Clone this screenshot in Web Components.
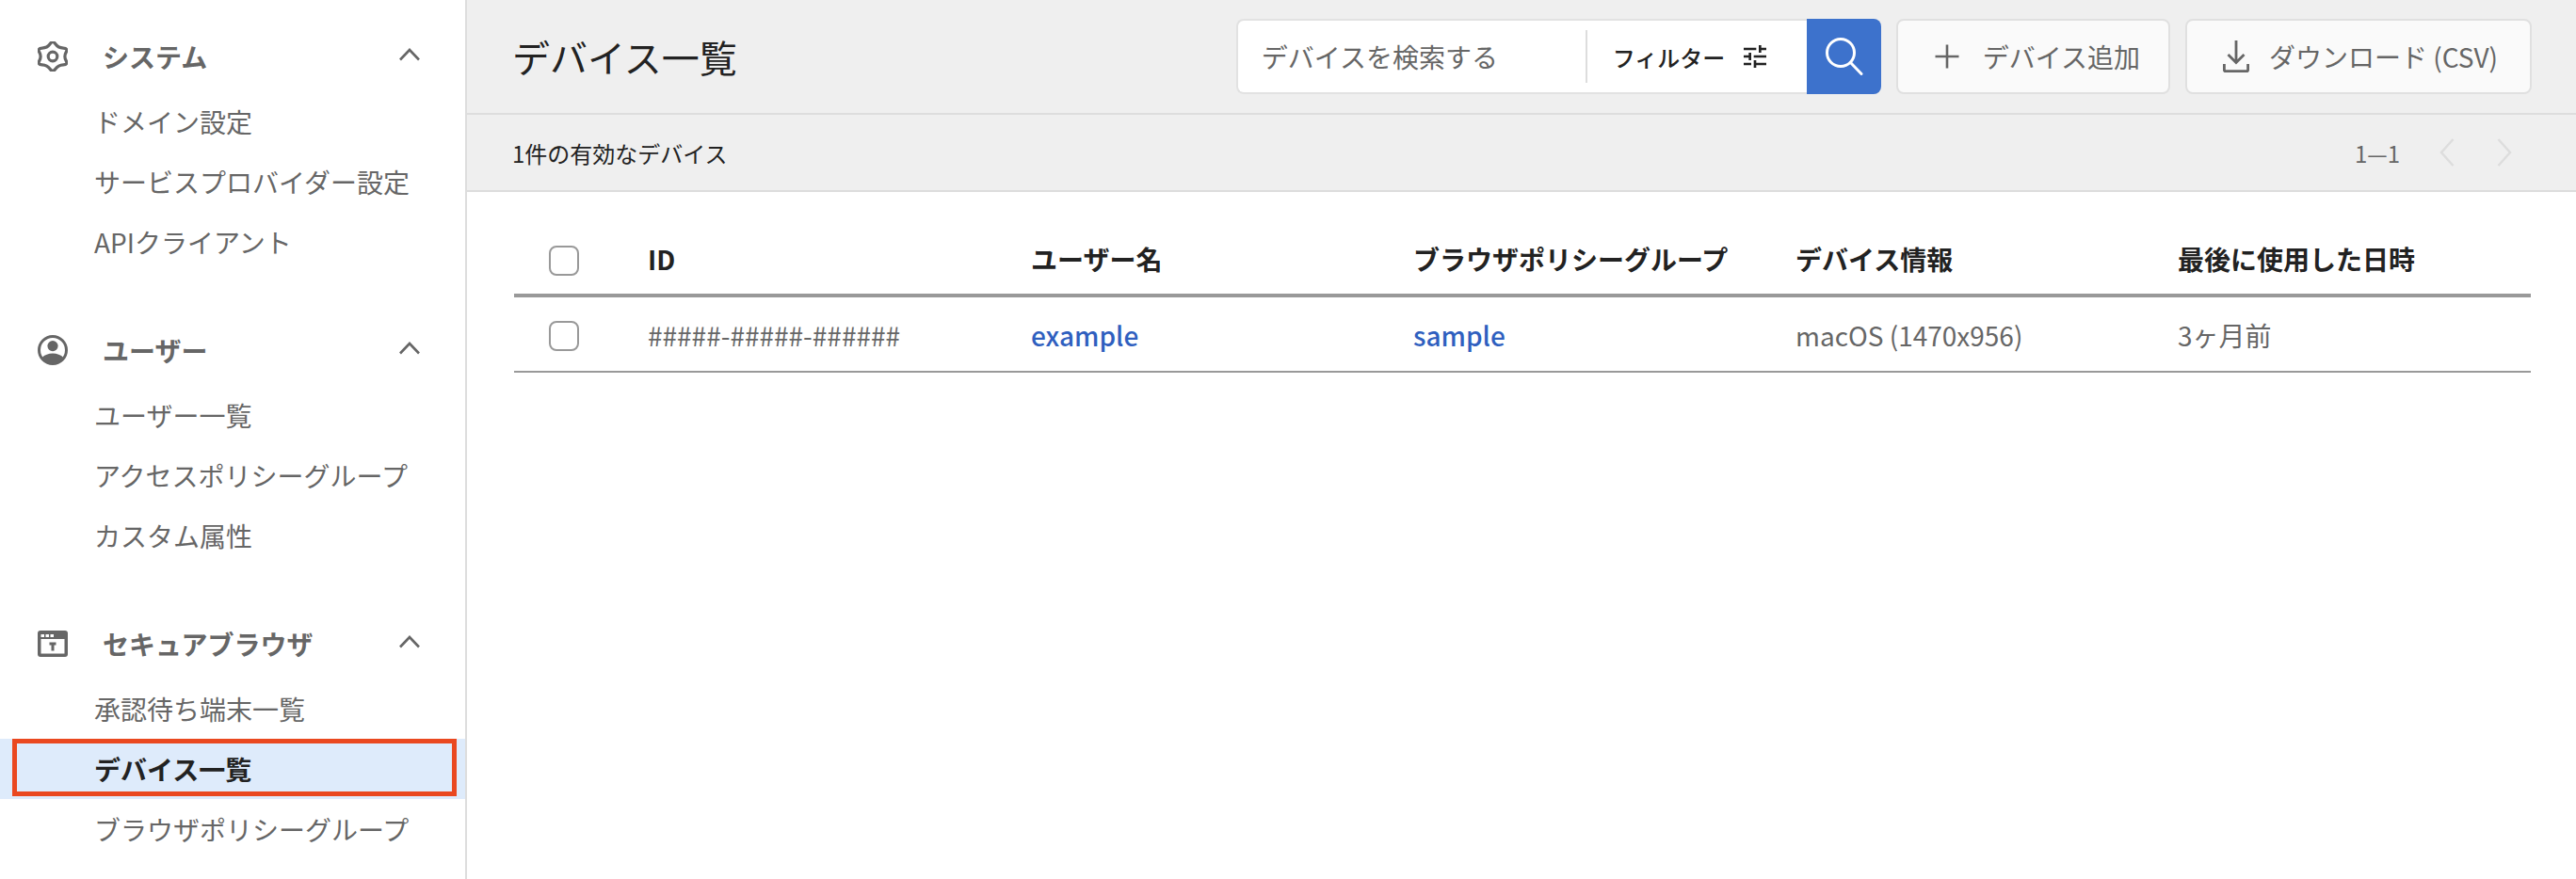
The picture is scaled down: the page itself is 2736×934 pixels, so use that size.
<!DOCTYPE html>
<html lang="ja">
<head>
<meta charset="utf-8">
<title>デバイス一覧</title>
<style>
  html, body { margin: 0; height: 100%; overflow: hidden; }
  body { font-family: "Noto Sans CJK JP", "Noto Sans", sans-serif; color: #666; background: #fff; }
</style>
</head>
<body>
<app-shell>
  <side-nav slot="nav">
    <nav-section label="システム" icon="gear">
      <nav-item>ドメイン設定</nav-item>
      <nav-item>サービスプロバイダー設定</nav-item>
      <nav-item>APIクライアント</nav-item>
    </nav-section>
    <nav-section label="ユーザー" icon="user">
      <nav-item>ユーザー一覧</nav-item>
      <nav-item>アクセスポリシーグループ</nav-item>
      <nav-item>カスタム属性</nav-item>
    </nav-section>
    <nav-section label="セキュアブラウザ" icon="browser">
      <nav-item>承認待ち端末一覧</nav-item>
      <nav-item active>デバイス一覧</nav-item>
      <nav-item>ブラウザポリシーグループ</nav-item>
    </nav-section>
  </side-nav>

  <page-toolbar heading="デバイス一覧">
    <search-box placeholder="デバイスを検索する" filter="フィルター"></search-box>
    <tool-button icon="plus">デバイス追加</tool-button>
    <tool-button icon="download">ダウンロード (CSV)</tool-button>
  </page-toolbar>
  <result-bar summary="1件の有効なデバイス" range="1—1"></result-bar>

  <device-table>
    <table-row head>
      <check-box></check-box>
      <span>ID</span>
      <span>ユーザー名</span>
      <span>ブラウザポリシーグループ</span>
      <span>デバイス情報</span>
      <span>最後に使用した日時</span>
    </table-row>
    <table-row>
      <check-box></check-box>
      <span>#####-#####-######</span>
      <a href="#">example</a>
      <a href="#">sample</a>
      <span>macOS (1470x956)</span>
      <span>3ヶ月前</span>
    </table-row>
  </device-table>
</app-shell>

<script>
// gear outline is a smooth spline through alternating lobe / valley points
const gearPath = (() => {
    const pts = [];
    for (let i = 0; i < 12; i++) {
        const r = i % 2 ? 10.6 : 17.4;
        const a = (i * 30 - 90) * Math.PI / 180;
        pts.push([16 + 1.1 * r * Math.cos(a), 16 + r * Math.sin(a)]);
    }
    const mid = (p, q) => [(p[0] + q[0]) / 2, (p[1] + q[1]) / 2].map(n => n.toFixed(2)).join(' ');
    let d = `M${mid(pts[11], pts[0])}`;
    pts.forEach((p, i) => {
        d += `Q${p[0].toFixed(2)} ${p[1].toFixed(2)} ${mid(p, pts[(i + 1) % 12])}`;
    });
    return d + 'Z';
})();

const ICONS = {
    gear: `<svg width="32" height="32" viewBox="0 0 32 32" fill="none" stroke="#666" stroke-width="3.2">
        <path d="${gearPath}" stroke-linejoin="round"/><circle cx="16" cy="16" r="4.8"/></svg>`,
    user: `<svg width="32" height="32" viewBox="0 0 32 32" fill="#666">
        <circle cx="16" cy="16" r="14.5" fill="none" stroke="#666" stroke-width="3"/>
        <circle cx="16" cy="11.6" r="5.6"/>
        <path d="M4.2 24.4C7.5 21 11.5 19.6 16 19.6s8.500 1.400 11.800 4.800A14.500 14.500 0 0 1 16 31 14.500 14.500 0 0 1 4.200 24.400Z"/></svg>`,
    browser: `<svg width="32" height="28" viewBox="0 0 32 28">
        <rect width="32" height="28" rx="3" fill="#666"/>
        <rect x="3.500" y="9" width="25" height="15.500" fill="#fff"/>
        <rect x="3.500" y="4" width="3.500" height="3" fill="#fff"/>
        <rect x="8.500" y="4" width="3.500" height="3" fill="#fff"/>
        <rect x="13.500" y="4" width="3.500" height="3" fill="#fff"/>
        <path d="M12.500 12.500h7v3h-2v6h-3v-6h-2z" fill="#666"/></svg>`,
    chevron: `<svg width="22" height="14" viewBox="0 0 22 14" fill="none" stroke="#666" stroke-width="2.600">
        <path d="M1 12.500 11 2l10 10.500"/></svg>`,
    plus: `<svg width="28" height="28" viewBox="0 0 28 28" fill="none" stroke="#666" stroke-width="2.600">
        <path d="M14 1.500v25M1.500 14h25"/></svg>`,
    download: `<svg width="28" height="34" viewBox="0 0 28 34" fill="none" stroke="#666" stroke-width="2.800">
        <path d="M14 0v23M5.500 15 14 23.500 22.500 15"/><path d="M1.400 25v6.200c0 .9.500 1.400 1.400 1.400h22.400c.9 0 1.400-.5 1.400-1.400V25"/></svg>`,
    tune: `<svg width="24" height="24" viewBox="3 3 18 18" fill="#222">
        <path d="M3 17v2h6v-2H3zM3 5v2h10V5H3zm10 16v-2h8v-2h-8v-2h-2v6h2zM7 9v2H3v2h4v2h2V9H7zm14 4v-2H11v2h10zm-6-4h2V7h4V5h-4V3h-2v6z"/></svg>`,
    search: `<svg width="40" height="40" viewBox="0 0 40 40" fill="none" stroke="#fff" stroke-width="3">
        <circle cx="16" cy="16" r="14.500"/><path d="M26.500 26.500 38 38.500" stroke-linecap="round"/></svg>`,
    prev: `<svg width="16" height="30" viewBox="0 0 16 30" fill="none" stroke="#ddd" stroke-width="2.500">
        <path d="M14.500 1 2 15l12.500 14"/></svg>`,
    next: `<svg width="16" height="30" viewBox="0 0 16 30" fill="none" stroke="#ddd" stroke-width="2.500">
        <path d="M1.500 1 14 15 1.500 29"/></svg>`
};

class AppShell extends HTMLElement {
    constructor() {
        super();
        this.attachShadow({ mode: 'open' });
    }

    connectedCallback() {
        this.shadowRoot.innerHTML = `
            <style>
                :host { display: flex; width: 2736px; height: 934px; overflow: hidden; }
                .nav { flex: 0 0 494px; border-right: 2px solid #ddd; }
                .main { flex: 1; display: flex; flex-direction: column; min-width: 0; }
            </style>
            <div class="nav"><slot name="nav"></slot></div>
            <div class="main"><slot></slot></div>
        `;
    }
}

class SideNav extends HTMLElement {
    constructor() {
        super();
        this.attachShadow({ mode: 'open' });
    }

    connectedCallback() {
        this.shadowRoot.innerHTML = `
            <style>
                :host { display: flex; flex-direction: column; gap: 55px; padding-top: 32px; }
            </style>
            <slot></slot>
        `;
    }
}

class NavSection extends HTMLElement {
    constructor() {
        super();
        this.attachShadow({ mode: 'open' });
    }

    connectedCallback() {
        const label = this.getAttribute('label') || '';
        const icon = this.getAttribute('icon');
        this.shadowRoot.innerHTML = `
            <style>
                :host { display: block; }
                .head {
                    display: flex;
                    align-items: center;
                    height: 56px;
                    margin-bottom: 9px;
                    padding: 0 48px 0 40px;
                    font-size: 28px;
                    font-weight: 700;
                    color: #666;
                }
                .icon { flex: 0 0 32px; display: flex; align-items: center; margin-right: 37px; }
                .label { flex: 1; }
                .chev { display: flex; margin-top: -4px; }
            </style>
            <div class="head">
                <span class="icon">${ICONS[icon]}</span>
                <span class="label">${label}</span>
                <span class="chev">${ICONS.chevron}</span>
            </div>
            <slot></slot>
        `;
    }
}

class NavItem extends HTMLElement {
    constructor() {
        super();
        this.attachShadow({ mode: 'open' });
    }

    connectedCallback() {
        this.shadowRoot.innerHTML = `
            <style>
                :host {
                    display: flex;
                    align-items: center;
                    position: relative;
                    height: 64px;
                    padding-left: 100px;
                    font-size: 28px;
                    color: #666;
                }
                :host([active]) { background: #deebfb; color: #222; font-weight: 700; }
                .mark { display: none; }
                /* red annotation box lying over the selected row */
                :host([active]) .mark {
                    display: block;
                    position: absolute;
                    left: 13px;
                    top: 0;
                    width: 472px;
                    height: 61px;
                    box-sizing: border-box;
                    border: 5px solid #ea4820;
                }
            </style>
            <slot></slot>
            <span class="mark"></span>
        `;
    }
}

class PageToolbar extends HTMLElement {
    constructor() {
        super();
        this.attachShadow({ mode: 'open' });
    }

    connectedCallback() {
        this.shadowRoot.innerHTML = `
            <style>
                :host {
                    display: flex;
                    align-items: center;
                    gap: 16px;
                    height: 120px;
                    padding: 0 47px 0 48px;
                    background: #efefef;
                    border-bottom: 2px solid #ddd;
                }
                h1 { flex: 1; margin: 0; font-size: 40px; font-weight: 400; color: #222; }
            </style>
            <h1>${this.getAttribute('heading') || ''}</h1>
            <slot></slot>
        `;
    }
}

class SearchBox extends HTMLElement {
    constructor() {
        super();
        this.attachShadow({ mode: 'open' });
    }

    connectedCallback() {
        this.shadowRoot.innerHTML = `
            <style>
                :host {
                    display: flex;
                    align-items: stretch;
                    width: 685px;
                    height: 80px;
                    box-sizing: border-box;
                    background: #fff;
                    border: 2px solid #e2e2e2;
                    border-right: 0;
                    border-radius: 8px;
                }
                .query {
                    flex: 0 0 369px;
                    display: flex;
                    align-items: center;
                    box-sizing: border-box;
                    padding-left: 25px;
                    font-size: 28px;
                    color: #666;
                }
                .sep { flex: 0 0 2px; margin: 10px 0 10px; background: #ddd; }
                .filter {
                    flex: 1;
                    display: flex;
                    align-items: center;
                    gap: 20px;
                    padding-left: 27px;
                    font-size: 24px;
                    font-weight: 500;
                    color: #222;
                }
                .go {
                    flex: 0 0 79px;
                    display: flex;
                    align-items: center;
                    justify-content: center;
                    box-sizing: border-box;
                    padding-left: 2px;
                    margin: -2px 0;
                    background: #3d72cc;
                    border-radius: 0 8px 8px 0;
                }
            </style>
            <span class="query">${this.getAttribute('placeholder') || ''}</span>
            <span class="sep"></span>
            <span class="filter">${this.getAttribute('filter') || ''}${ICONS.tune}</span>
            <span class="go">${ICONS.search}</span>
        `;
    }
}

class ToolButton extends HTMLElement {
    constructor() {
        super();
        this.attachShadow({ mode: 'open' });
    }

    connectedCallback() {
        this.shadowRoot.innerHTML = `
            <style>
                :host {
                    display: flex;
                    align-items: center;
                    gap: 24px;
                    height: 80px;
                    box-sizing: border-box;
                    padding: 0 34px 0 38px;
                    background: #fafafa;
                    border: 2px solid #e0e0e0;
                    border-radius: 8px;
                    font-size: 28px;
                    color: #666;
                    white-space: nowrap;
                }
                :host([icon="plus"]) { padding-right: 30px; }
                :host([icon="download"]) { gap: 21px; }
                svg { display: block; }
            </style>
            ${ICONS[this.getAttribute('icon')]}
            <slot></slot>
        `;
    }
}

class ResultBar extends HTMLElement {
    constructor() {
        super();
        this.attachShadow({ mode: 'open' });
    }

    connectedCallback() {
        this.shadowRoot.innerHTML = `
            <style>
                :host {
                    display: flex;
                    align-items: center;
                    height: 80px;
                    padding: 0 68px 0 48px;
                    background: #efefef;
                    border-bottom: 2px solid #ddd;
                    font-size: 24px;
                    color: #222;
                }
                .summary { flex: 1; }
                .range { color: #666; margin-right: 42px; }
                .pager { display: flex; gap: 45px; }
            </style>
            <span class="summary">${this.getAttribute('summary') || ''}</span>
            <span class="range">${this.getAttribute('range') || ''}</span>
            <span class="pager">${ICONS.prev}${ICONS.next}</span>
        `;
    }
}

class DeviceTable extends HTMLElement {
    constructor() {
        super();
        this.attachShadow({ mode: 'open' });
    }

    connectedCallback() {
        this.shadowRoot.innerHTML = `
            <style>
                :host { display: block; margin: 36px 48px 0 50px; }
            </style>
            <slot></slot>
        `;
    }
}

class TableRow extends HTMLElement {
    constructor() {
        super();
        this.attachShadow({ mode: 'open' });
    }

    connectedCallback() {
        this.shadowRoot.innerHTML = `
            <style>
                :host {
                    display: grid;
                    grid-template-columns: 142px 407px 406px 406px 406px 1fr;
                    align-items: center;
                    box-sizing: border-box;
                    height: 80px;
                    padding-top: 4px;
                    border-bottom: 2px solid #999;
                    font-size: 28px;
                    color: #666;
                }
                :host([head]) { height: 76px; padding-top: 2px; border-bottom-width: 4px; font-weight: 700; color: #222; }
                ::slotted(span), ::slotted(a) { margin-bottom: 3px; }
                :host([head]) ::slotted(span) { margin-bottom: 5px; }
                ::slotted(a) { color: #2f5fbf; font-weight: 500; text-decoration: none; }
            </style>
            <slot></slot>
        `;
    }
}

class CheckBox extends HTMLElement {
    constructor() {
        super();
        this.attachShadow({ mode: 'open' });
    }

    connectedCallback() {
        this.shadowRoot.innerHTML = `
            <style>
                :host { display: block; }
                span {
                    display: block;
                    width: 32px;
                    height: 32px;
                    box-sizing: border-box;
                    margin-left: 37px;
                    background: #fff;
                    border: 2px solid #999;
                    border-radius: 8px;
                }
            </style>
            <span></span>
        `;
    }
}

customElements.define('app-shell', AppShell);
customElements.define('side-nav', SideNav);
customElements.define('nav-section', NavSection);
customElements.define('nav-item', NavItem);
customElements.define('page-toolbar', PageToolbar);
customElements.define('search-box', SearchBox);
customElements.define('tool-button', ToolButton);
customElements.define('result-bar', ResultBar);
customElements.define('device-table', DeviceTable);
customElements.define('table-row', TableRow);
customElements.define('check-box', CheckBox);
</script>
</body>
</html>
